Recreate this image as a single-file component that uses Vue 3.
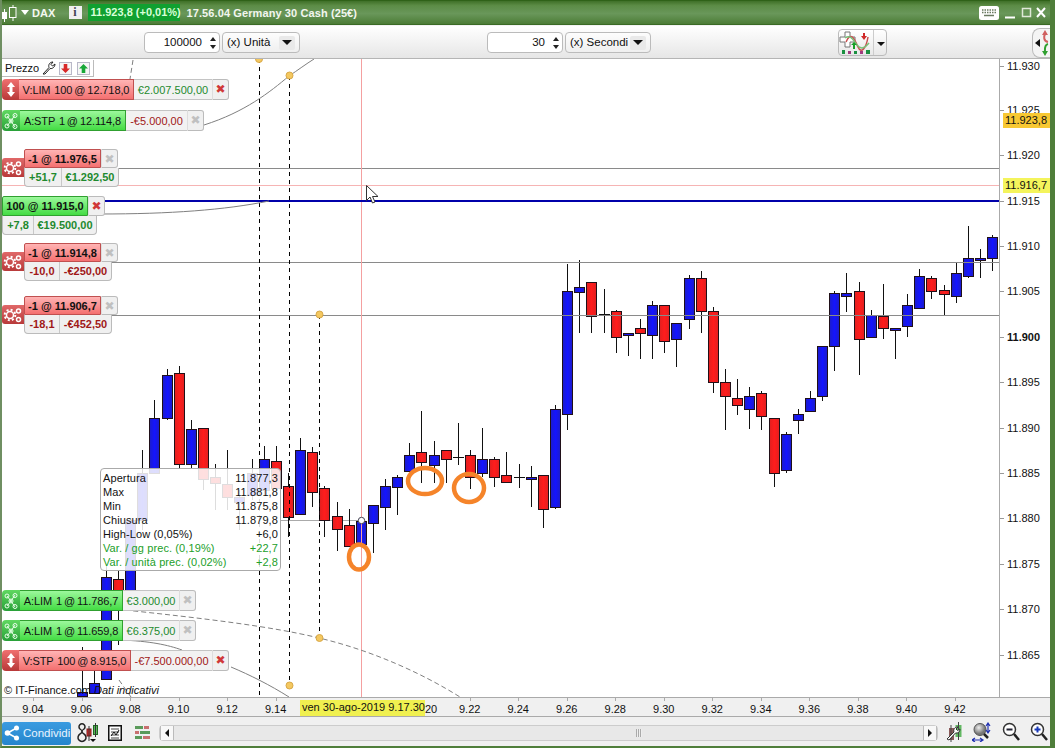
<script setup>
const raw = [
  ['b',692,696,647,696],['b',683,693,670,693],['b',577,679,565,680],['r',579,600,570,645],['b',520,595,520,595],
  ['b',473,520,450,530],['b',418,473,400,473],['b',375,418,369,420],['r',373,464,366,468],['b',429,464,420,468],
  ['r',428,479,428,490],['r',477,483,464,510],['r',484,497,450,510],['b',497,502,490,530],['b',473,495,459,500],
  ['b',459,490,446,495],['r',461,488,446,490],['r',486,517,473,537],['b',450,514,438,514],['r',452,492,447,507],
  ['r',488,520,486,537],['r',516,529,502,551],['r',525,546,509,546],['b',521,544,502,557],['b',505,523,505,553],
  ['b',486,507,479,530],['b',477,487,475,515],['b',455,471,443,471],['r',452,462,411,483],['b',455,465,441,483],
  ['r',450,459,450,483],['d',457,457,423,465],['r',455,477,450,489],['b',459,473,428,477],['r',459,477,457,487],
  ['r',475,482,452,482],['d',477,477,464,488],['b',477,479,466,507],['r',475,509,475,528],['b',409,507,405,509],
  ['b',291,414,264,430],['b',287,292,260,333],['r',282,316,282,333],['d',314,314,289,333],['r',311,337,310,353],
  ['b',333,335,333,356],['r',328,333,319,359],['b',305,335,301,359],['r',305,341,305,353],['b',323,339,323,367],
  ['b',278,319,275,329],['r',278,311,271,333],['r',311,382,307,393],['r',382,396,369,430],['r',398,405,379,415],
  ['b',396,409,387,429],['r',393,416,391,430],['r',418,473,418,487],['b',434,470,432,473],['b',414,420,409,434],
  ['b',398,411,391,411],['b',346,396,346,401],['b',293,346,291,371],['b',293,296,273,312],['r',291,339,282,375],
  ['b',315,337,310,337],['r',316,328,284,339],['b',328,330,328,359],['b',305,326,294,337],['b',276,308,269,308],
  ['r',278,291,276,299],['r',290,294,285,315],['b',273,296,263,303],['b',258,276,226,278],['b',258,260,249,278],
  ['b',237,258,235,271]
]
const candles = raw.map((c, i) => ({
  x: Math.round(33 + 12.14 * (i + 4)), kind: c[0], top: c[1], bottom: c[2], hi: c[3], lo: c[4]
}))

const priceLabels = [
  ['11.930', 66], ['11.925', 110], ['11.920', 155], ['11.915', 201], ['11.910', 246], ['11.905', 291],
  ['11.900', 337, true], ['11.895', 382], ['11.890', 428], ['11.885', 473], ['11.880', 518], ['11.875', 564],
  ['11.870', 609], ['11.865', 655]
].map(([text, y, strong]) => ({ text, y, strong }))

const covered = ['9.16', '9.18', '9.20']
const times = ['9.04','9.06','9.08','9.10','9.12','9.14','9.16','9.18','9.20','9.22','9.24','9.26','9.28','9.30','9.32','9.34','9.36','9.38','9.40','9.42']
  .map((text, i) => ({ text, x: 33 + 48.52 * i }))
  .filter(t => !covered.includes(t.text))

const orders = [
  { y: 79, side: 'sell', icon: 'arrows', label: 'V:LIM  100 @ 12.718,0', value: '€2.007.500,00', good: true, iw: 17, lw: 115, vw: 78, active: true },
  { y: 110, side: 'buy', icon: 'net', label: 'A:STP  1 @ 12.114,8', value: '-€5.000,00', good: false, iw: 18, lw: 106, vw: 61, active: false },
  { y: 590, side: 'buy', icon: 'net', label: 'A:LIM  1 @ 11.786,7', value: '€3.000,00', good: true, iw: 18, lw: 103, vw: 56, active: false },
  { y: 620, side: 'buy', icon: 'net', label: 'A:LIM  1 @ 11.659,8', value: '€6.375,00', good: true, iw: 18, lw: 103, vw: 56, active: false },
  { y: 650, side: 'sell', icon: 'arrows', label: 'V:STP  100 @ 8.915,0', value: '-€7.500.000,00', good: false, iw: 17, lw: 112, vw: 81, active: true }
]

const positions = [
  { y: 149, label: '-1 @ 11.976,5', pts: '+51,7', cash: '€1.292,50', good: true, lw: 77, pw: 36, cw: 57 },
  { y: 243, label: '-1 @ 11.914,8', pts: '-10,0', cash: '-€250,00', good: false, lw: 77, pw: 34, cw: 52 },
  { y: 296, label: '-1 @ 11.906,7', pts: '-18,1', cash: '-€452,50', good: false, lw: 77, pw: 34, cw: 52 }
]

const tooltip = [
  ['Apertura', '11.877,3'], ['Max', '11.881,8'], ['Min', '11.875,8'], ['Chiusura', '11.879,8'],
  ['High-Low (0,05%)', '+6,0'], ['Var. / gg prec. (0,19%)', '+22,7', true], ['Var. / unità prec. (0,02%)', '+2,8', true]
].map(([name, value, green]) => ({ name, value, green }))
</script>

<template>
  <div class="window">
    <header class="titlebar">
      <svg class="t-logo" width="16" height="18" viewBox="0 0 16 18">
        <rect x="0" y="8" width="5" height="7" fill="#fff" />
        <path d="M2.500 5v13M11 1v16" stroke="#fff" />
        <rect x="7.500" y="3.500" width="6.500" height="10" fill="#5c8c46" stroke="#fff" />
      </svg>
      <span class="t-caret"></span>
      <span class="t-name">DAX</span>
      <span class="t-info">i</span>
      <span class="t-price">11.923,8 (+0,01%)</span>
      <span class="t-desc">17.56.04 Germany 30 Cash (25€)</span>
      <span class="t-spacer"></span>
      <svg class="t-kbd" width="20" height="14" viewBox="0 0 20 14">
        <rect width="20" height="14" rx="2.500" fill="#fff" />
        <path d="M3 4h14M3 6.500h14" stroke="#6a7a60" stroke-width="1.500" stroke-dasharray="1.500 1" />
        <path d="M5 9.500h10" stroke="#6a7a60" stroke-width="1.500" />
      </svg>
      <svg class="t-win" width="42" height="12" viewBox="0 0 42 12">
        <path d="M0 10.500h10" stroke="#fff" stroke-width="2" />
        <rect x="17.500" y="1.500" width="8" height="8" fill="none" stroke="#dfe8d8" stroke-width="1.500" />
        <path d="M32 1l8 9M40 1l-8 9" stroke="#fff" stroke-width="2" />
      </svg>
    </header>

    <div class="toolbar">
      <div class="spin spin-a"><span>100000</span><i class="arrows-ud"></i></div>
      <div class="select sel-a">(x) Unità<b></b></div>
      <div class="spin spin-b"><span>30</span><i class="arrows-ud"></i></div>
      <div class="select sel-b">(x) Secondi<b></b></div>
      <div class="ind-btn">
        <svg width="34" height="26" viewBox="0 0 34 26">
          <path d="M6 2h5v5h5v5h-5v5H6v-5H1V7h5z" fill="#fff" stroke="#777" />
          <path d="M7 12c5-12 9-2 12 5s8 2 10-10" fill="none" stroke="#c85050" stroke-width="1.500" />
          <path d="M6 8c6-4 8 2 12 7s8 3 12-2" fill="none" stroke="#78c078" stroke-width="1.500" />
          <path d="M14 19v-4h-2l3-3 3 3h-2v4z" fill="#18a028" />
          <path d="M24 3v3h-2l3 4 3-4h-2V3z" fill="#d02828" />
          <path d="M3 20h3v4H3zM15 21h3v3h-3zM27 20h4v4h-4z" fill="#1a9040" />
          <path d="M9 21h3v3H9zM21 21h3v3h-3z" fill="#a03a80" />
        </svg>
        <span class="ind-more"><b></b></span>
      </div>
      <div class="side-tab">
        <span class="side-tri"></span>
        <svg width="10" height="28" viewBox="0 0 10 28">
          <path d="M8 13C3 12 4 7 5 5" fill="none" stroke="#d06060" stroke-width="2" />
          <path d="M2 6l3-5 3 5z" fill="#d06060" />
          <path d="M8 15c-4 1-3 6-3 8" fill="none" stroke="#30a030" stroke-width="2" />
          <path d="M2 22l3 5 3-5z" fill="#30a030" />
        </svg>
      </div>
    </div>

    <div class="chart-row">
      <main class="plot">
        <svg class="canvas" width="997" height="638" viewBox="2 59 997 638">
          <defs>
            <linearGradient id="blueFill" x1="0" x2="1" y1="0" y2="0">
              <stop offset="0" stop-color="#1c1cc8" /><stop offset=".5" stop-color="#1414ff" /><stop offset="1" stop-color="#1c1cc8" />
            </linearGradient>
            <linearGradient id="redFill" x1="0" x2="1" y1="0" y2="0">
              <stop offset="0" stop-color="#e02020" /><stop offset=".5" stop-color="#ff1c1c" /><stop offset="1" stop-color="#e02020" />
            </linearGradient>
          </defs>

          <path d="M281 520.500H361" stroke="#aaa" fill="none" />

          <g v-for="c in candles" :key="c.x">
            <path :d="`M${c.x + .5} ${c.hi}V${c.lo}`" stroke="#111" fill="none" />
            <path v-if="c.kind === 'd'" :d="`M${c.x - 5} ${c.top + .5}H${c.x + 6}`" stroke="#111" fill="none" />
            <rect v-else :x="c.x - 4.5" :y="c.top + .5" width="10" :height="c.bottom - c.top"
              :fill="c.kind === 'b' ? 'url(#blueFill)' : 'url(#redFill)'" stroke="#201018" />
          </g>

          <path d="M0 168.500H999M0 262.500H999M0 315.500H999" stroke="#8a8a8a" fill="none" />
          <path d="M0 185.500H999" stroke="#f6b4b4" fill="none" />
          <path d="M361.500 59V697" stroke="#f4a0a0" fill="none" />
          <path d="M259.500 59V697M289.500 76V685M319.500 315V638" stroke="#000" stroke-dasharray="4 4" fill="none" />
          <path d="M105 201H999" stroke="#0000aa" stroke-width="2" fill="none" />
          <g fill="none" stroke="#808080">
            <path d="M204 125C245 112 270 92 289 76C298 70 306 64 314 59" />
            <path d="M100 214C170 214 225 210 269 201" />
            <path d="M120 640C150 641 168 645 182 650" />
            <path d="M231 667C250 675 270 685 289 697" />
            <path d="M125 610C200 618 270 626 319 638C370 650 420 672 460 697M133 60L130 79M119 680L131 697" stroke-dasharray="5 3" />
          </g>
          <g fill="#f4c860" stroke="#d8a848">
            <circle cx="259" cy="59" r="3.500" /><circle cx="289.500" cy="75.500" r="3.500" /><circle cx="319.500" cy="314.500" r="3.500" />
            <circle cx="319.500" cy="638" r="3.500" /><circle cx="289.500" cy="685.500" r="3.500" />
          </g>
          <circle cx="361.500" cy="520.500" r="3.200" fill="#fff" stroke="#445" />
          <g fill="none" stroke="#f5842a" stroke-width="4.500">
            <ellipse cx="425" cy="481" rx="17" ry="13" />
            <ellipse cx="469" cy="488" rx="15" ry="14" />
            <ellipse cx="359" cy="557" rx="10" ry="12.500" />
          </g>
          <path d="M366.500 185.500v15l3.500-3.500 2.500 6 2.500-1-2.500-5.500h5.500z" fill="#fff" stroke="#333" />
        </svg>

        <div class="prezzo">
          <span>Prezzo</span>
          <svg width="14" height="14" viewBox="0 0 14 14">
            <path d="M1 13l6-6.500C6 3.500 8 1 11 1L9 3.500 10.500 5 13 3c0 3-2.500 5-5 4.500L3 13z" fill="#fff" stroke="#222" />
          </svg>
          <span class="pz-btn"><svg width="9" height="9" viewBox="0 0 10 10"><path d="M3 0h4v5h3L5 10 0 5h3z" fill="#d82828" /></svg></span>
          <span class="pz-btn"><svg width="9" height="9" viewBox="0 0 10 10"><path d="M3 10h4V5h3L5 0 0 5h3z" fill="#18a838" /></svg></span>
        </div>

        <div class="copyright">© IT-Finance.com <em>Dati indicativi</em></div>

        <div class="tooltip">
          <div v-for="r in tooltip" :key="r.name" class="tip-row" :class="{ green: r.green }">
            <span>{{ r.name }}</span><span>{{ r.value }}</span>
          </div>
        </div>

        <div v-for="o in orders" :key="o.y" class="order" :style="{ top: o.y - 59 + 'px' }">
          <span class="o-icon" :class="o.side" :style="{ width: o.iw + 'px' }">
            <svg v-if="o.icon === 'arrows'" width="8" height="15" viewBox="0 0 8 15">
              <path d="M4 0l4 5H5.500v5H8l-4 5-4-5h2.500V5H0z" fill="#fff" />
            </svg>
            <svg v-else width="14" height="16" viewBox="0 0 14 16">
              <path d="M3 3l4 5-4 5M11 2L7 8l4 6" fill="none" stroke="#e8ffe8" />
              <circle cx="3" cy="3" r="2" fill="none" stroke="#e8ffe8" /><circle cx="11" cy="2.500" r="2" fill="none" stroke="#e8ffe8" />
              <circle cx="7" cy="8" r="2" fill="none" stroke="#e8ffe8" />
              <circle cx="3" cy="13" r="2" fill="none" stroke="#e8ffe8" /><circle cx="11" cy="13.500" r="2" fill="none" stroke="#e8ffe8" />
            </svg>
          </span>
          <span class="o-label" :class="o.side" :style="{ width: o.lw + 'px' }">{{ o.label }}</span>
          <span class="o-value" :class="o.good ? 'good' : 'bad'" :style="{ width: o.vw + 'px' }">{{ o.value }}</span>
          <span class="o-x" :class="{ active: o.active }">✖</span>
        </div>

        <div v-for="p in positions" :key="p.y" class="pos" :style="{ top: p.y - 59 + 'px' }">
          <span class="pos-icon">
            <svg width="20" height="18" viewBox="0 0 20 18">
              <g fill="none" stroke="#fff" stroke-width="1.500">
                <circle cx="7" cy="9" r="3.500" /><circle cx="15.500" cy="5" r="2" /><circle cx="15.500" cy="13.500" r="2" />
                <circle cx="7" cy="9" r="5.300" stroke-dasharray="2 2.160" stroke-width="2" />
              </g>
            </svg>
          </span>
          <div class="pos-body">
            <div class="pos-top">
              <span class="o-label sell strong" :style="{ width: p.lw + 'px' }">{{ p.label }}</span>
              <span class="o-x">✖</span>
            </div>
            <div class="pos-sub" :class="p.good ? 'good' : 'bad'">
              <span :style="{ width: p.pw + 'px' }">{{ p.pts }}</span>
              <span :style="{ width: p.cw + 'px' }">{{ p.cash }}</span>
            </div>
          </div>
        </div>

        <div class="pos main-pos">
          <div class="pos-body">
            <div class="pos-top">
              <span class="o-label buy strong main-label">100 @ 11.915,0</span>
              <span class="o-x active">✖</span>
            </div>
            <div class="pos-sub good">
              <span class="sub-a">+7,8</span><span class="sub-b">€19.500,00</span>
            </div>
          </div>
        </div>
      </main>

      <aside class="price-axis">
        <div v-for="l in priceLabels" :key="l.text" class="p-label" :class="{ strong: l.strong }" :style="{ top: l.y - 59 + 'px' }">{{ l.text }}</div>
        <div class="p-tag tag-last">11.923,8</div>
        <div class="p-tag tag-cross">11.916,7</div>
      </aside>
    </div>

    <div class="time-axis">
      <div v-for="t in times" :key="t.text" class="t-label" :style="{ left: t.x + 'px' }">{{ t.text }}</div>
      <div class="t-cursor">ven 30-ago-2019 9.17.30</div>
      <div class="t-frag">20</div>
    </div>

    <footer class="bottombar">
      <button class="share">
        <svg width="16" height="16" viewBox="0 0 16 16">
          <path d="M12.500 3L3.500 8l9 5" fill="none" stroke="#fff" stroke-width="1.500" />
          <circle cx="12.500" cy="3" r="2.500" fill="#fff" /><circle cx="3.500" cy="8" r="2.800" fill="#fff" /><circle cx="12.500" cy="13" r="2.500" fill="#fff" />
        </svg>
        <span>Condividi</span>
      </button>
      <svg class="bi-1" width="24" height="20" viewBox="0 0 24 20">
        <path d="M4 6a3 3 0 1 1 4 0c-3 2-3 3 0 5a4 4 0 1 1-4 0c3-2 3-3 0-5z" fill="none" stroke="#222" stroke-width="1.500" />
        <rect x="11" y="6" width="4" height="7" fill="#e03030" stroke="#7a1818" />
        <rect x="17.500" y="2.500" width="4" height="9" fill="#58b858" stroke="#226622" />
        <path d="M13 3v15M19.500 0v14" stroke="#333" />
        <path d="M14 16h6l-3 3z" fill="#111" />
      </svg>
      <svg class="bi-2" width="14" height="16" viewBox="0 0 14 16">
        <rect x=".75" y=".75" width="12.500" height="14.500" fill="#fff" stroke="#111" stroke-width="1.500" />
        <path d="M3 4h8M3 7h8M3 10h8M3 13h8" stroke="#444" />
        <path d="M3 11l3-4 2 3 3-5" fill="none" stroke="#111" />
      </svg>
      <svg class="bi-3" width="16" height="16" viewBox="0 0 16 16">
        <path d="M0 1h8v3H0zM5 6h10v3H5zM0 11h7v3H0z" fill="#5a9a5a" />
        <path d="M9 1h5v3H9zM0 6h4v3H0zM8 11h7v3H8z" fill="#c87070" />
      </svg>
      <div class="scroll">
        <span class="sc-end"><b class="tri-l"></b></span>
        <span class="sc-track"><i></i></span>
        <span class="sc-end"><b class="tri-r"></b></span>
      </div>
      <svg class="bi-4" width="16" height="20" viewBox="0 0 16 20">
        <rect x="3" y="6" width="5" height="12" fill="#8a5a5a" />
        <rect x="9.500" y="3" width="6" height="12" fill="#62b862" />
        <path d="M12.500 0v18M5 3v17" stroke="#444" />
        <path d="M1 17l7-7c-1-3 1-5 4-5l-2 2 1.500 1.500L14 7c0 3-2 4.500-4.500 4L3 18z" fill="#fff" stroke="#333" />
      </svg>
      <svg class="bi-5" width="19" height="20" viewBox="0 0 19 20">
        <defs><radialGradient id="lens" cx=".4" cy=".35"><stop offset="0" stop-color="#eee" /><stop offset="1" stop-color="#777" /></radialGradient></defs>
        <circle cx="8" cy="7.500" r="6" fill="url(#lens)" stroke="#555" />
        <path d="M12 12l4 4" stroke="#222" stroke-width="2.500" />
        <path d="M16 2v8M14 4l2-3 2 3M14 8l2 3 2-3M1 18h9M3 16l-3 2 3 2M8 16l3 2-3 2" fill="none" stroke="#2030b0" stroke-width="1.200" />
      </svg>
      <svg class="bi-6" width="18" height="20" viewBox="0 0 18 20">
        <circle cx="7.500" cy="7.500" r="6" fill="#fff" stroke="#333" stroke-width="1.500" />
        <path d="M4.500 7.500h6" stroke="#223" stroke-width="2" />
        <path d="M12 12l5 6" stroke="#222" stroke-width="2.500" />
      </svg>
      <svg class="bi-7" width="18" height="20" viewBox="0 0 18 20">
        <circle cx="7.500" cy="7.500" r="6" fill="#fff" stroke="#333" stroke-width="1.500" />
        <path d="M4.500 7.500h6M7.500 4.500v6" stroke="#1838b8" stroke-width="2" />
        <path d="M12 12l5 6" stroke="#222" stroke-width="2.500" />
      </svg>
    </footer>
  </div>
</template>

<style>
html, body { margin: 0; background: #fff; }
</style>

<style scoped>
.window {
  width: 1055px; height: 748px; box-sizing: border-box; overflow: hidden;
  display: flex; flex-direction: column; position: relative;
  background: #f2f2f2; border-left: 2px solid #6f8f62; border-right: 5px solid #4f7e3a; border-bottom: 2px solid #4f7e3a;
  font: 11px "Liberation Sans", Arial, sans-serif; color: #111;
}
.titlebar {
  height: 25px; flex: none; margin: 0 -5px 0 -2px; display: flex; align-items: center; box-sizing: border-box;
  background: linear-gradient(#3f7028 0, #5c8c46 20%, #69975a 55%, #4c7c36 100%);
  border-top: 1px solid #2f6218; border-bottom: 1px solid #3a6a24; color: #fff; font-weight: bold; font-size: 11px;
}
.t-logo { margin-left: 2px; }
.t-caret { width: 0; height: 0; border: 4px solid transparent; border-top: 5px solid #fff; border-bottom: 0; margin-left: 3px; }
.t-name { margin-left: 3px; color: #f4f8f0; letter-spacing: .1px; }
.t-info { margin-left: 13px; width: 13px; height: 13px; background: #f0f0f0; color: #445; text-align: center; font: bold 12px/13px "Liberation Serif", serif; }
.t-price { margin-left: 6px; height: 17px; line-height: 17px; padding: 0 3px; width: 86px; white-space: nowrap; background: #10a030; color: #d8ffd8; }
.t-desc { margin-left: 7px; color: #f2f6ee; white-space: nowrap; letter-spacing: .1px; }
.t-spacer { flex: 1; }
.t-kbd { margin-right: 6px; }
.t-win { margin-right: 8px; }

.toolbar {
  height: 33px; flex: none; position: relative; margin-top: 1px; box-sizing: border-box; display: flex; align-items: center;
  padding-left: 142px; background: linear-gradient(#fff, #e6e6e6); border-bottom: 1px solid #b5b5b5;
}
.spin, .select {
  height: 21px; box-sizing: border-box; background: #fff; border: 1px solid #bbb; border-radius: 4px; display: flex; align-items: center; font-size: 11.500px;
}
.spin { justify-content: flex-end; position: relative; padding-right: 17px; }
.spin-a { width: 76px; }
.spin-b { width: 76px; margin-left: 187px; }
.select { margin-left: 2px; padding-left: 4px; position: relative; background: linear-gradient(#fdfdfd, #efefef); }
.sel-a { width: 78px; }
.sel-b { width: 86px; }
.select b { position: absolute; right: 4px; top: 3px; width: 16px; height: 14px; background: #e9e9e9; border-radius: 2px; }
.select b::after { content: ""; position: absolute; left: 3px; top: 4px; border: 5px solid transparent; border-top: 5px solid #111; border-bottom: 0; }
.arrows-ud { position: absolute; right: 5px; top: 4px; width: 0; height: 0; }
.arrows-ud::before, .arrows-ud::after { content: ""; position: absolute; left: -4px; border: 3px solid transparent; }
.arrows-ud::before { top: 0; border-bottom: 4px solid #222; border-top: 0; }
.arrows-ud::after { top: 8px; border-top: 4px solid #222; border-bottom: 0; }
.ind-btn { margin-left: 187px; width: 49px; height: 27px; box-sizing: border-box; border: 1px solid #bbb; border-radius: 4px; display: flex; background: linear-gradient(#fff, #e8e8e8); }
.ind-btn svg { flex: none; }
.ind-more { flex: 1; border-left: 1px solid #ccc; position: relative; }
.ind-more b { position: absolute; left: 3px; top: 12px; border: 4px solid transparent; border-top: 4px solid #111; border-bottom: 0; }
.side-tab { position: absolute; right: 0; top: 2px; width: 18px; height: 30px; box-sizing: border-box; border: 1px solid #bbb; border-right: 0; border-radius: 8px 0 0 8px; background: #f4f4f4; display: flex; align-items: center; justify-content: flex-end; }
.side-tri { position: absolute; left: 2px; top: 10px; border: 4px solid transparent; border-right: 5px solid #111; border-left: 0; }

.chart-row { height: 638px; flex: none; display: flex; }
.plot { width: 997px; position: relative; background: #fff; overflow: hidden; }
.canvas { position: absolute; left: 0; top: 0; display: block; }
.price-axis { width: 51px; position: relative; background: #fff; border-left: 1px solid #aaa; box-sizing: border-box; }
.p-label { position: absolute; left: 0; margin-top: -7px; padding-left: 7px; line-height: 14px; }
.p-label::before { content: ""; position: absolute; left: 0; top: 7px; width: 4px; height: 1px; background: #999; }
.p-label.strong { font-weight: bold; }
.p-tag { position: absolute; left: 3px; width: 47px; height: 15px; line-height: 15px; box-sizing: border-box; padding-left: 2px; }
.tag-last { top: 54px; background: #f8c832; }
.tag-cross { top: 119px; background: #f4f45c; }

.prezzo { position: absolute; left: 0; top: 1px; width: 92px; height: 17px; box-sizing: border-box; padding-left: 3px; background: #fff; border-right: 1px solid #bbb; border-bottom: 1px solid #bbb; display: flex; align-items: center; gap: 3px; }
.pz-btn { width: 13px; height: 13px; box-sizing: border-box; border: 1px solid #b8b8c8; background: #f6f6f6; display: flex; align-items: center; justify-content: center; }
.pz-btn:last-child { margin-left: 2px; }
.copyright { position: absolute; left: 2px; top: 624px; line-height: 14px; white-space: nowrap; }
.tooltip { position: absolute; left: 98px; top: 409px; width: 181px; height: 103px; box-sizing: border-box; padding: 2px; letter-spacing: .1px; background: rgba(255,255,255,.86); border: 1px solid #aaa; border-radius: 4px; }
.tip-row { display: flex; justify-content: space-between; line-height: 14px; color: #111; }
.tip-row.green { color: #22a02a; }

.order { position: absolute; left: 0; height: 21px; display: flex; }
.o-icon { display: flex; align-items: center; justify-content: center; box-sizing: border-box; border-radius: 4px 0 0 4px; flex: none; }
.o-icon.sell { background: linear-gradient(#f07070, #b83838); }
.o-icon.buy { background: linear-gradient(#60d860, #28a038); }
.o-label { display: block; box-sizing: border-box; text-align: center; white-space: pre; word-spacing: -1px; letter-spacing: -.1px; line-height: 20px; flex: none; font-size: 11px; }
.o-label.sell { background: linear-gradient(#ffb4b4, #f47070); border: 1px solid #c05050; border-width: 1px 1px 1px 0; }
.o-label.buy { background: linear-gradient(#9cf89c, #44dc44); border: 1px solid #30a030; border-width: 1px 1px 1px 0; }
.o-label.strong { font-weight: bold; word-spacing: 0; letter-spacing: 0; line-height: 18px; border-left-width: 1px; border-radius: 2px 0 0 0; }
.o-value { flex: none; box-sizing: border-box; text-align: center; line-height: 20px; background: #f2f2f2; border: 1px solid #c4c4c4; border-width: 1px 0; }
.good { color: #1e8a2e; }
.bad { color: #a01818; }
.o-x { flex: none; width: 17px; box-sizing: border-box; background: #f0f0f0; border: 1px solid #bbb; border-left-color: #ddd; border-radius: 0 3px 3px 0; color: #c0c0c0; text-align: center; font: 12px/18px "DejaVu Sans", sans-serif; }
.o-x.active { color: #d03838; }

.pos { position: absolute; left: 22px; display: flex; }
.pos-icon { position: absolute; left: -22px; top: 9px; width: 22px; height: 19px; background: linear-gradient(#e06868, #b83a3a); border-radius: 3px 0 0 3px; display: flex; align-items: center; justify-content: center; }
.pos-body { display: flex; flex-direction: column; }
.pos-top { display: flex; height: 19px; }
.pos-sub { display: flex; align-self: flex-start; height: 19px; font-weight: bold; background: #f0f0f0; border: 1px solid #bbb; border-top: 0; border-radius: 0 0 4px 4px; box-sizing: border-box; }
.pos-sub span { box-sizing: border-box; text-align: center; line-height: 19px; border-left: 1px solid #c8c8c8; }
.pos-sub span:first-child { border-left: 0; }
.main-pos { left: 0; top: 137px; }
.main-pos .pos-top { height: 20px; }
.main-pos .pos-sub span { line-height: 18px; }
.main-label { width: 86px; line-height: 19px !important; }
.sub-a { width: 30px; }
.sub-b { width: 63px; }

.time-axis { height: 20px; flex: none; position: relative; background: #f0f0f0; border-top: 1px solid #aaa; border-bottom: 1px solid #aaa; box-sizing: border-box; margin-right: -1px; }
.t-label { position: absolute; top: 4px; margin-left: -2px; width: 0; display: flex; justify-content: center; line-height: 14px; white-space: nowrap; }
.t-label::before { content: ""; position: absolute; left: 0; top: -4px; width: 1px; height: 3px; background: #aaa; }
.t-cursor { position: absolute; left: 298px; top: 2px; height: 16px; line-height: 15px; width: 125px; padding-left: 2px; box-sizing: border-box; white-space: nowrap; background: #f0f050; }
.t-frag { position: absolute; left: 423px; top: 4px; line-height: 14px; }

.bottombar { flex: 1; display: flex; align-items: center; position: relative; background: #f0f0f0; }
.share { margin: 3px 0 0 0; padding: 0 0 0 2px; width: 69px; height: 23px; display: flex; align-items: center; gap: 3px; border: 0; border-radius: 3px; background: linear-gradient(#3a9be0, #2585cc); color: #e8f4ff; font: 11.500px "Liberation Sans", Arial, sans-serif; }
.bi-1 { margin: 2px 0 0 5px; }
.bi-2 { margin: 2px 0 0 8px; }
.bi-3 { margin: 2px 0 0 13px; }
.scroll { width: 779px; height: 16px; margin: 2px 0 0 8px; display: flex; background: #e8e8e8; border: 1px solid #ccc; border-radius: 4px; box-sizing: border-box; }
.sc-end { width: 14px; background: #f8f8f8; border: 1px solid #bbb; border-width: 0 1px; position: relative; box-sizing: border-box; }
.sc-end b { position: absolute; top: 3px; left: 4px; border: 4px solid transparent; }
.tri-l { border-right: 4px solid #111 !important; border-left: 0 !important; }
.tri-r { border-left: 4px solid #111 !important; border-right: 0 !important; }
.sc-track { flex: 1; position: relative; }
.sc-track i { position: absolute; left: 462px; top: 3px; width: 6px; height: 8px; background: repeating-linear-gradient(90deg, #aaa 0 1px, #eee 1px 2px); }
.bi-4 { margin-left: 8px; }
.bi-5 { margin-left: 10px; }
.bi-6 { margin-left: 11px; }
.bi-7 { margin-left: 10px; }
</style>
